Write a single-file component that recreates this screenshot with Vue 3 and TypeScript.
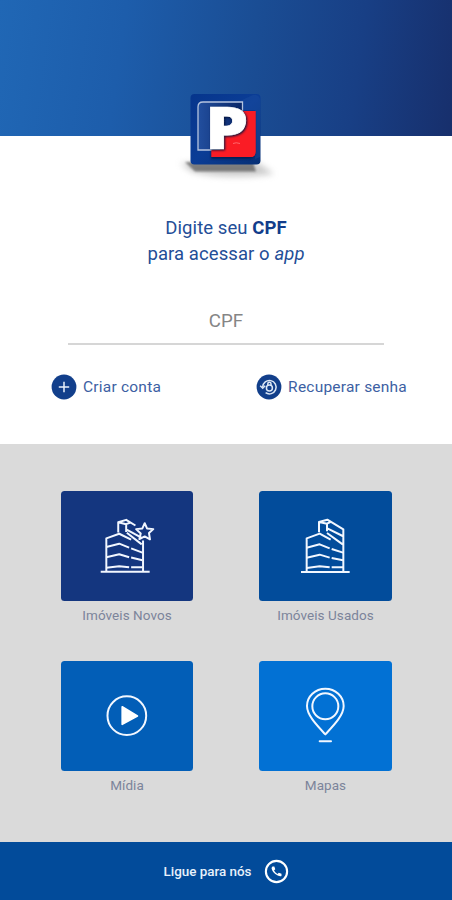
<script setup lang="ts">
type TileIcon = 'new' | 'used' | 'media' | 'map'

interface Tile {
  label: string
  icon: TileIcon
}

const tiles: Tile[] = [
  { label: 'Imóveis Novos', icon: 'new' },
  { label: 'Imóveis Usados', icon: 'used' },
  { label: 'Mídia', icon: 'media' },
  { label: 'Mapas', icon: 'map' },
]
</script>

<template>
  <main class="screen">
    <header class="hero">
      <svg class="logo" viewBox="0 0 100 105" role="img" aria-label="Logo">
        <defs>
          <linearGradient id="box" x1="0" y1="0" x2="1" y2="1">
            <stop offset="0" stop-color="#06358c" />
            <stop offset=".5" stop-color="#0b3d96" />
            <stop offset="1" stop-color="#062f74" />
          </linearGradient>
          <linearGradient id="pane" x1="0" y1="0" x2="1" y2="0">
            <stop offset="0" stop-color="#224f9f" />
            <stop offset="1" stop-color="#082567" />
          </linearGradient>
          <filter id="soft" x="-30%" y="-100%" width="160%" height="300%">
            <feGaussianBlur stdDeviation="3" />
          </filter>
          <filter id="drop" x="-20%" y="-50%" width="140%" height="200%">
            <feGaussianBlur stdDeviation="1.3" />
          </filter>
        </defs>
        <path d="M4 78H82L98 89Q50 95 16 87Z" fill="#999" opacity=".5" filter="url(#soft)" />
        <path d="M9 77H77L80 86.5H19Z" fill="#444" opacity=".6" filter="url(#drop)" />
        <rect x="14.5" y="9" width="70" height="70.5" rx="4" fill="url(#box)" />
        <path d="M64 16L77 10H80Q84 11 84 15V72L79 74V25H64Z" fill="#2355a7" opacity=".3" />
        <path d="M35 27H79V67Q79 74 72 74H35Z" fill="#03163f" opacity=".7" filter="url(#drop)" />
        <path d="M35.5 26H79.5V67Q79.5 72 74.5 72H35.5Z" fill="#fa1c25" />
        <path d="M27 17H66.5V65H22V22Q22 17 27 17Z" fill="url(#pane)" stroke="#b5c4df" stroke-width="1.3" />
        <path d="M44 48Q58 53 67.5 44V26H79.5V67Q79.5 72 74.5 72H35.5V65H44Z" fill="#fa1c25" />
        <text class="mark" x="29.3" y="63.9" textLength="43" lengthAdjust="spacingAndGlyphs">P</text>
        <path d="M57 58.5Q60 57 64 58.5" fill="none" stroke="#ff797c" stroke-width=".8" />
      </svg>
    </header>

    <section class="access">
      <h1 class="title">
        <span>Digite seu <b>CPF</b></span><br />
        <span>para acessar o <i>app</i></span>
      </h1>
      <label class="field"><input type="text" placeholder="CPF" aria-label="CPF" /></label>
      <nav class="links">
        <a class="link">
          <svg viewBox="0 0 26 26">
            <circle cx="13" cy="13" r="12.4" fill="#123f8b" />
            <path d="M13 7.8V18.2M7.8 13H18.2" stroke="#e9f1fb" stroke-width="1.5" />
          </svg>
          <span>Criar conta</span>
        </a>
        <a class="link">
          <svg viewBox="0 0 26 26">
            <circle cx="13" cy="13" r="12.4" fill="#123f8b" />
            <g fill="none" stroke="#dce7f5" stroke-width="1.5">
              <path d="M6.7 13A6.7 6.7 0 1 1 9.6 18.7" />
              <path d="M4.2 11.7L6.7 14.2L9.2 11.7" />
              <path d="M11.8 11.4V9.8A1.6 1.6 0 0 1 15 9.8V11.4" />
              <circle cx="13.4" cy="14" r="3" />
            </g>
          </svg>
          <span>Recuperar senha</span>
        </a>
      </nav>
    </section>

    <section class="menu">
      <a v-for="tile in tiles" :key="tile.icon" class="item">
        <span class="tile" :class="tile.icon">
          <svg v-if="tile.icon === 'new'" viewBox="31 18 399 330">
            <g class="line">
              <path d="M151 261H299M168 259V160L207 146L243 164M204 142V111L228 104L256 121M204 111L228 117V141M228 117L241 112M228 133L274 158M230 143L275 178M279 166V259" />
              <path d="M168 186L207 176L237 188M243 190L277 203M168 217L207 208L237 217M243 218L277 226M168 249L207 244L237 247M243 247H277" />
              <path d="M284 114L291 130L310 132L297 144L300 163L284 154L268 162L272 145L258 132L277 130Z" />
            </g>
          </svg>
          <svg v-else-if="tile.icon === 'used'" viewBox="28 18 399 330">
            <g class="line">
              <path d="M154 261H300M171 259V160L210 146L243 164M208 142V111L233 104L281 133V259M208 111L232 116V139M232 116L242 111M233 130L279 153M232 144L279 178" />
              <path d="M171 188L210 178L240 190M246 192L280 203M171 218L210 209L240 218M246 219L280 226M171 249L210 244L240 247M246 247H280" />
            </g>
          </svg>
          <svg v-else-if="tile.icon === 'media'" viewBox="31 18 399 330">
            <circle class="line" cx="230" cy="182" r="58.5" />
            <path d="M216 155L262 183L216 208Z" fill="#fff" stroke="#fff" stroke-width="5" stroke-linejoin="round" />
          </svg>
          <svg v-else viewBox="28 18 399 330">
            <g class="line">
              <path d="M227 238C210 219 172 184 172 153A55 52 0 0 1 282 153C282 184 244 219 227 238Z" />
              <circle cx="227" cy="154" r="39" />
              <path d="M210 259H244" stroke-linecap="round" />
            </g>
          </svg>
        </span>
        <span class="label">{{ tile.label }}</span>
      </a>
    </section>

    <footer class="call">
      <span>Ligue para nós</span>
      <svg viewBox="0 0 24 24">
        <circle cx="12" cy="12" r="10.2" fill="none" stroke="#fff" stroke-width="2" />
        <path d="M8.1 7.2L9.9 7.1L10.8 9.9L9.6 11.1Q10.8 13.2 13 14.5L14.2 13.3L16.8 14.2V16.3Q15.7 17.2 13.2 15.9Q7.8 13.4 7.2 8.7Z" fill="#fff" />
      </svg>
    </footer>
  </main>
</template>

<style>
body {
  margin: 0;
}
</style>

<style scoped>
.screen {
  width: 452px;
  height: 900px;
  display: flex;
  flex-direction: column;
  overflow: hidden;
  background: #fff;
  font-family: Roboto, "Liberation Sans", sans-serif;
  color: #234e97;
}
.hero {
  flex: none;
  height: 136px;
  box-sizing: border-box;
  padding: 85px 0 0 176px;
  background: linear-gradient(98deg, #2067b5 0%, #1d5dab 27%, #1a4d94 55%, #183f85 78%, #172f6c 100%);
}
.logo {
  display: block;
  width: 100px;
  height: 105px;
  overflow: visible;
}
.mark {
  font: 800 58.5px "Open Sans", sans-serif;
  fill: #fff;
  stroke: #fff;
  stroke-width: .7px;
  filter: drop-shadow(1.2px 1.5px 1px #03133b);
}
.access {
  flex: none;
  height: 308px;
  box-sizing: border-box;
  padding-top: 80px;
}
.title {
  margin: 0;
  text-align: center;
  font-size: 18.5px;
  line-height: 25.5px;
  font-weight: 400;
  letter-spacing: .08px;
}
.title b {
  font-weight: 700;
  color: #123d8b;
}
.field {
  display: block;
  width: 316px;
  margin: 37px auto 0 68px;
}
.field input {
  display: block;
  box-sizing: border-box;
  width: 100%;
  height: 41px;
  padding: 0 0 5px;
  border: 0;
  border-bottom: 2px solid #d6d6d6;
  outline: 0;
  background: transparent;
  text-align: center;
  font: 18.7px Roboto, sans-serif;
}
.field input::placeholder {
  color: #858585;
  opacity: 1;
}
.links {
  display: flex;
  justify-content: space-between;
  padding: 29px 45px 0 51px;
}
.link {
  display: flex;
  align-items: center;
  gap: 6px;
  height: 26px;
  font-size: 15.5px;
  letter-spacing: .22px;
  color: #3d5fa3;
  white-space: nowrap;
}
.link svg {
  width: 26px;
  height: 26px;
}
.menu {
  flex: none;
  height: 398px;
  box-sizing: border-box;
  padding: 47px 60px 0 61px;
  display: grid;
  grid-template-columns: 132px 133px;
  grid-template-rows: 170px 170px;
  justify-content: space-between;
  align-content: start;
  background: #dadada;
}
.item {
  display: flex;
  flex-direction: column;
  align-items: center;
}
.tile {
  width: 100%;
  height: 110px;
  border-radius: 3.5px;
  overflow: hidden;
}
.tile svg {
  display: block;
  width: 100%;
  height: 110px;
}
.new {
  background: #14367f;
}
.used {
  background: #024c9b;
}
.media {
  background: #025eb7;
}
.map {
  background: #0271d4;
}
.line {
  fill: none;
  stroke: #f2f7ff;
  stroke-width: 6;
  stroke-linejoin: round;
}
.label {
  margin-top: 5px;
  font-size: 13.5px;
  line-height: 19px;
  letter-spacing: .06px;
  color: #7c849a;
  white-space: nowrap;
}
.call {
  flex: 1;
  display: flex;
  align-items: center;
  justify-content: center;
  gap: 13px;
  padding-left: 1px;
  background: #024b9a;
  color: #e9f1fb;
  font-size: 13.4px;
  font-weight: 500;
}
.call svg {
  width: 25px;
  height: 25px;
}
</style>
